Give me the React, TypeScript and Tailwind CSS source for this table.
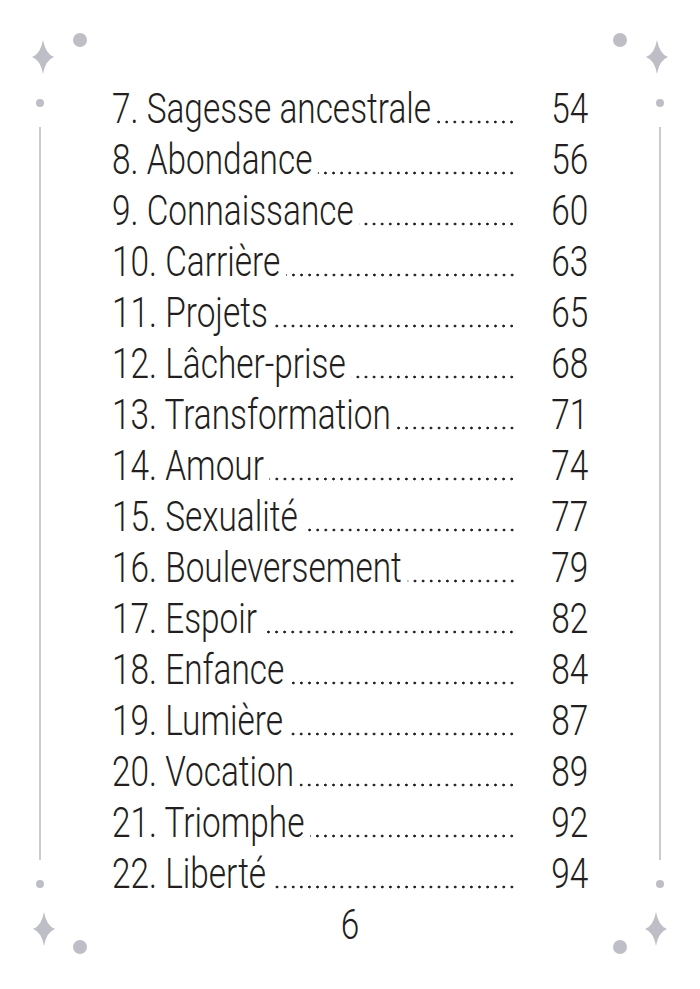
import React from 'react';

const entries = [
  { title: '7. Sagesse ancestrale', page: '54' },
  { title: '8. Abondance', page: '56' },
  { title: '9. Connaissance', page: '60' },
  { title: '10. Carrière', page: '63' },
  { title: '11. Projets', page: '65' },
  { title: '12. Lâcher-prise', page: '68' },
  { title: '13. Transformation', page: '71' },
  { title: '14. Amour', page: '74' },
  { title: '15. Sexualité', page: '77' },
  { title: '16. Bouleversement', page: '79' },
  { title: '17. Espoir', page: '82' },
  { title: '18. Enfance', page: '84' },
  { title: '19. Lumière', page: '87' },
  { title: '20. Vocation', page: '89' },
  { title: '21. Triomphe', page: '92' },
  { title: '22. Liberté', page: '94' },
];

// four-point sparkle centred on (cx, cy)
const Sparkle = ({ cx, cy }: { cx: number; cy: number }) => (
  <path
    d={`M${cx} ${cy - 17} Q${cx + 2.5} ${cy - 3} ${cx + 11} ${cy} Q${cx + 2.5} ${cy + 3} ${cx} ${cy + 17} Q${cx - 2.5} ${cy + 3} ${cx - 11} ${cy} Q${cx - 2.5} ${cy - 3} ${cx} ${cy - 17} Z`}
  />
);

const SideColumn = ({ side }: { side: 'left' | 'right' }) => {
  const left = side === 'left';
  const lineX = left ? 40 : 60;
  const starX = left ? 43 : 57;
  const circleX = left ? 80 : 20;
  return (
    <div className="w-[100px] flex flex-col">
      <svg width="100" height="110" className="fill-[#bebec6]">
        <Sparkle cx={starX} cy={57} />
        <circle cx={circleX} cy={40} r={7} />
        <circle cx={lineX} cy={103} r={4} />
      </svg>
      <div className={`mt-[17px] w-[2px] h-[733px] bg-[#cbcbcf] ${left ? 'ml-[39px]' : 'ml-[59px]'}`} />
      <svg width="100" height="129" className="fill-[#bebec6]">
        <circle cx={lineX} cy={24} r={4} />
        <Sparkle cx={left ? 44 : 56} cy={69} />
        <circle cx={circleX} cy={87} r={7} />
      </svg>
    </div>
  );
};

const App = () => {
  return (
    <div className="w-[700px] h-[989px] bg-white flex overflow-hidden font-['Roboto',sans-serif] text-[#231f20]">
      <SideColumn side="left" />

      {/* Contents */}
      <div className="w-[500px] flex flex-col pt-[83px]">
        <div className="ml-[12px] w-[599px] origin-left scale-x-[0.795]">
          {entries.map((entry) => (
            <div key={entry.title} className="flex items-baseline h-[51px] text-[42px] leading-[51px] font-light">
              <span className="whitespace-nowrap">{entry.title}</span>
              {/* dot leader, aligned from the right like a tab leader */}
              <span className="flex-1 min-w-0 ml-[7px] self-stretch bg-[radial-gradient(circle,#231f20_1.2px,transparent_1.7px)] bg-[length:10.2px_6px] bg-[position:right_36px] bg-repeat-x" />
              <span className="w-[91px] text-right">{entry.page}</span>
            </div>
          ))}
        </div>
        <div className="w-full text-center text-[42px] leading-[51px] font-light scale-x-[0.795]">6</div>
      </div>

      <SideColumn side="right" />
    </div>
  );
};

export default App;
